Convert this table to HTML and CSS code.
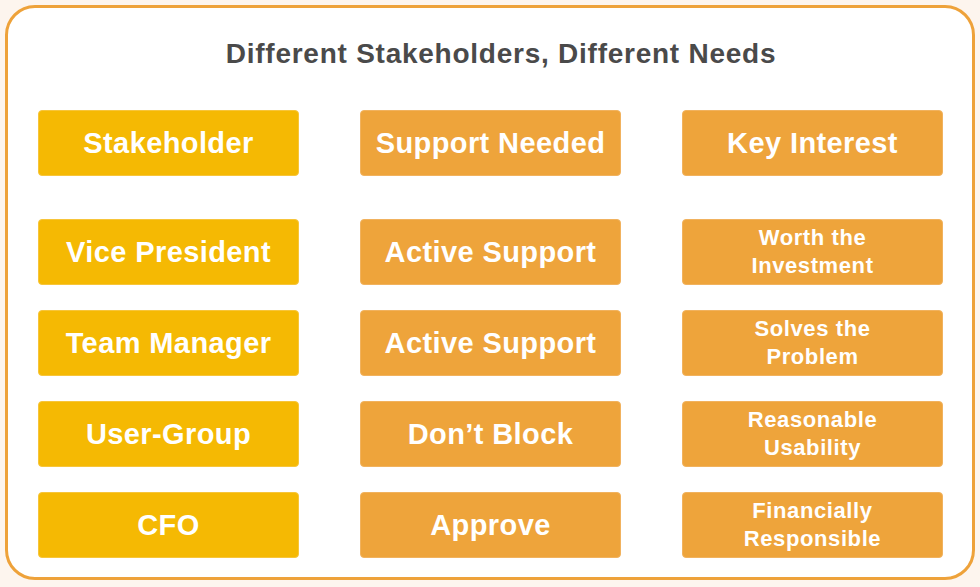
FILE: index.html
```html
<!DOCTYPE html>
<html lang="en">
<head>
<meta charset="utf-8">
<title>Different Stakeholders, Different Needs</title>
<link rel="stylesheet" href="styles.css">
</head>
<body>
<div class="card">
  <h1 class="title">Different Stakeholders, Different Needs</h1>
  <div class="grid header">
    <div class="cell yellow">Stakeholder</div>
    <div class="cell orange">Support Needed</div>
    <div class="cell orange">Key Interest</div>
  </div>
  <div class="grid rows">
    <div class="cell yellow">Vice President</div>
    <div class="cell orange">Active Support</div>
    <div class="cell orange small">Worth the<br>Investment</div>

    <div class="cell yellow">Team Manager</div>
    <div class="cell orange">Active Support</div>
    <div class="cell orange small">Solves the<br>Problem</div>

    <div class="cell yellow">User-Group</div>
    <div class="cell orange">Don’t Block</div>
    <div class="cell orange small">Reasonable<br>Usability</div>

    <div class="cell yellow">CFO</div>
    <div class="cell orange">Approve</div>
    <div class="cell orange small">Financially<br>Responsible</div>
  </div>
</div>
</body>
</html>
```
FILE: styles.css
```css
* { box-sizing: border-box; }
html, body { margin: 0; padding: 0; }
body {
  width: 980px;
  height: 587px;
  background: #fdf5ee;
  font-family: "Liberation Sans", Arial, sans-serif;
  padding: 5px;
}
.card {
  width: 970px;
  height: 575px;
  background: #ffffff;
  border: 3px solid #eea23a;
  border-radius: 30px;
  padding: 31px 30px 0 30px;
}
.title {
  margin: 0;
  padding-left: 22px;
  text-align: center;
  font-size: 28px;
  letter-spacing: 0.75px;
  line-height: 30px;
  font-weight: bold;
  color: #4a4a4a;
}
.grid {
  display: grid;
  grid-template-columns: 261px 261px 261px;
  column-gap: 61px;
}
.header { margin-top: 41px; }
.rows {
  margin-top: 43px;
  row-gap: 25px;
}
.cell {
  height: 66px;
  border-radius: 4px;
  display: flex;
  align-items: center;
  justify-content: center;
  text-align: center;
  color: #ffffff;
  font-weight: bold;
  font-size: 29px;
  letter-spacing: 0.4px;
}
.yellow { background: #f5b903; border: 1px solid #f7c53a; }
.orange { background: #eea43b; border: 1px solid #f1b25e; }
.small {
  font-size: 22px;
  letter-spacing: 0.6px;
  line-height: 28px;
}
```
